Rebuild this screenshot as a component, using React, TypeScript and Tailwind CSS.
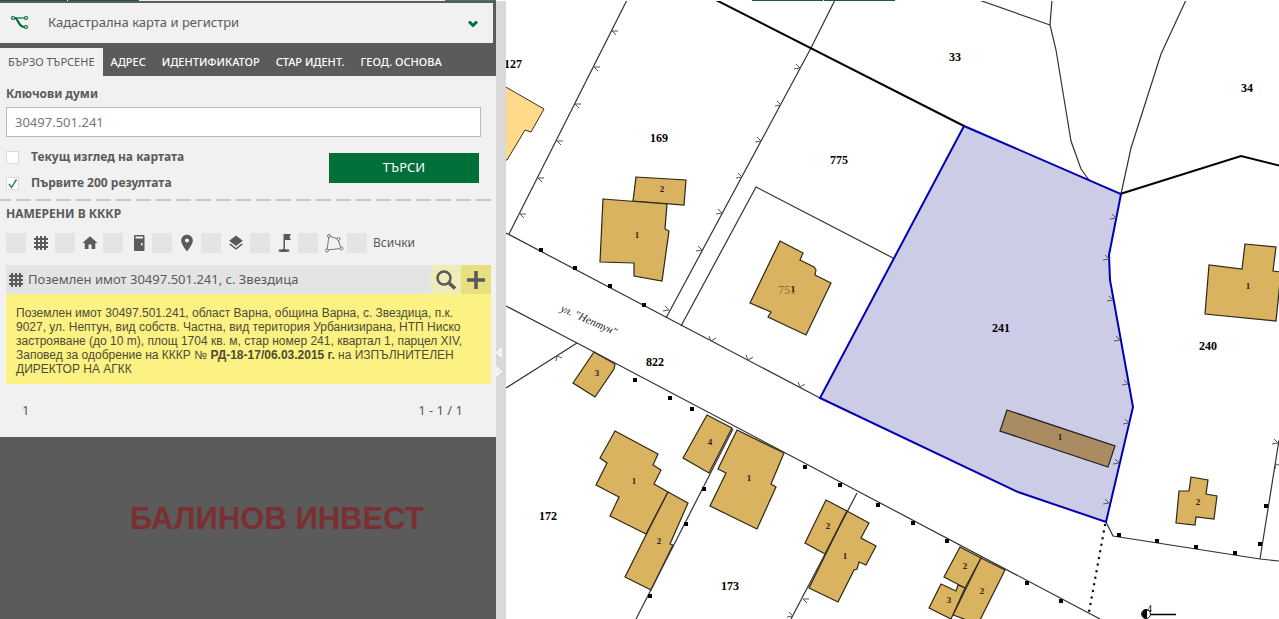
import { useState } from 'react';
import type { ReactNode } from 'react';
import { MdHome, MdLayers, MdLocationOn } from 'react-icons/md';

const tabs = ['БЪРЗО ТЪРСЕНЕ', 'АДРЕС', 'ИДЕНТИФИКАТОР', 'СТАР ИДЕНТ.', 'ГЕОД. ОСНОВА'];

const GridIcon = () => (
  <svg className="size-4" viewBox="0 0 16 16" fill="none" stroke="currentColor" strokeWidth={2}>
    <path d="M4 1v14M8 1v14M12 1v14M1 4h14M1 8h14M1 12h14" />
  </svg>
);

const DoorIcon = () => (
  <svg className="size-4" viewBox="0 0 16 16" fill="currentColor">
    <path
      fillRule="evenodd"
      d="M3 1a1 1 0 0 1 1-1h8.500a1 1 0 0 1 1 1v14a1 1 0 0 1-1 1H4a1 1 0 0 1-1-1zM4.500 1.500v2h7.500v-2zM10 8v2.500h1.500V8z"
    />
  </svg>
);

const FlagIcon = () => (
  <svg className="h-5 w-4" viewBox="0 0 16 20" fill="currentColor">
    <path d="M6.500 1H8v16H6.500zM8 1h6l-1.500 3L14 7H8z" />
    <ellipse cx="7" cy="17.500" rx="5.500" ry="1.500" />
  </svg>
);

const PolygonIcon = () => (
  <svg className="size-5" viewBox="0 0 20 20" fill="none" stroke="#777" strokeWidth={1}>
    <path d="M5 3L3 17L17 15.500L14 6Z" />
    <circle cx="5" cy="3" r="1.500" fill="#eee" />
    <circle cx="3" cy="17.500" r="1.500" fill="#eee" />
    <circle cx="17.500" cy="15.500" r="1.500" fill="#eee" />
    <circle cx="14.500" cy="6" r="1.500" fill="#eee" />
  </svg>
);

const filters: { label: string; icon: ReactNode }[] = [
  { label: 'Поземлени имоти', icon: <GridIcon /> },
  { label: 'Сгради', icon: <MdHome className="size-[18px]" /> },
  { label: 'Обекти', icon: <DoorIcon /> },
  { label: 'Адреси', icon: <MdLocationOn className="size-5" /> },
  { label: 'Слоеве', icon: <MdLayers className="size-[18px]" /> },
  { label: 'Геодезически точки', icon: <FlagIcon /> },
  { label: 'Контури', icon: <PolygonIcon /> },
];

// Map geometry
const buildings = [
  '636,177 686,180 684,205 633,201',
  '603,199 667,204 665,229 669,231 662,281 634,276 634,263 600,262',
  '780,241 803,253 800,260 814,267 816,270 815,275 831,283 806,335 768,317 771,312 750,303',
  '594,352 615,364 614,369 595,397 573,383',
  '615,431 658,454 653,465 661,470 654,484 668,492 646,534 610,516 619,497 596,485 607,463 600,458',
  '668,492 688,503 670,544 673,545 651,590 625,577 646,535',
  '707,415 732,428 709,473 683,458',
  '737,430 784,453 771,484 776,487 757,529 710,506 726,473 718,469',
  '826,500 847,511 825,554 805,543',
  '847,511 869,523 861,538 876,546 866,565 859,562 857,569 854,570 838,602 809,588',
  '960,547 981,558 965,588 944,577',
  '981,558 1005,570 978,624 953,615',
  '941,584 956,591 958,585 965,588 951,619 929,608',
  '1245,244 1276,247 1273,271 1281,272 1276,321 1205,314 1209,265 1242,269',
  '1191,477 1208,480 1206,494 1217,496 1214,519 1196,517 1195,525 1176,523 1179,491 1189,491',
];

const borders = [
  '627,0 509,234',
  '506,233 820,398',
  '835,0 811,48 666,318',
  '895,259 756,187 681,326',
  '979,0 1050,25',
  '1052,0 1050,25 1056,50 1071,141 1081,169 1089,180',
  '1186,0 1161,54 1131,148 1121,194',
  '506,306 577,343 1100,619',
  '506,388 577,343',
  '733,429 636,619',
  '857,493 791,619',
  '1106,522 1113,536 1260,559 1279,561',
  '1260,559 1279,440',
];

const posts = [
  [541, 250], [575, 268], [610, 286], [644, 305], [635, 380], [670, 398], [692, 409],
  [805, 467], [840, 485], [878, 505], [913, 523], [947, 541], [1027, 583], [1061, 601],
  [704, 489], [686, 524], [650, 596], [1119, 535], [1157, 541], [1196, 547], [1235, 553],
  [1260, 544], [1266, 506],
];

const ticks = [
  { d: 'M6 0H0L4 4', at: [[612, 31], [594, 67], [575, 104], [557, 141], [538, 178], [520, 214], [803, 599]] },
  {
    d: 'M-4 -4L0 0L-6 1',
    at: [
      [800, 68], [781, 105], [761, 141], [742, 177], [722, 213], [702, 250], [669, 310], [793, 616],
      [1116, 218], [1109, 259], [1113, 300], [1120, 340], [1128, 384], [1129, 423], [1119, 463],
      [1109, 503], [1278, 443],
    ],
  },
  { d: 'M-2 -5L0 0L5 -3', at: [[711, 341], [748, 360], [800, 387]] },
  { d: 'M-1 5L0 0L5 2', at: [[557, 356], [1276, 464]] },
];

const parcelLabels: [number, number, string][] = [
  [513, 68, '127'], [659, 142, '169'], [839, 164, '775'], [955, 61, '33'], [1247, 92, '34'],
  [1001, 332, '241'], [1208, 350, '240'], [655, 366, '822'], [548, 520, '172'], [730, 590, '173'],
];

const buildingLabels: [number, number, string][] = [
  [662, 192, '2'], [637, 238, '1'], [793, 292, '1'], [597, 376, '3'], [634, 484, '1'],
  [659, 544, '2'], [710, 445, '4'], [749, 481, '1'], [828, 529, '2'], [845, 559, '1'],
  [965, 569, '2'], [982, 594, '2'], [949, 603, '3'], [1248, 289, '1'], [1198, 505, '2'],
  [1060, 440, '1'],
];

function CadastreMap() {
  return (
    <svg
      className="block h-full w-full font-['Liberation_Serif',serif]"
      viewBox="506 1 773 618"
      preserveAspectRatio="xMinYMin slice"
      role="img"
      aria-label="Кадастрална карта"
    >
      <polygon points="504,86 544,109 531,132 525,130 507,160 504,160" fill="#ffda8b" stroke="#3a3020" />
      <g fill="#d9b360" stroke="#2d2718" strokeWidth={1.2}>
        {buildings.map((points) => (
          <polygon key={points} points={points} />
        ))}
      </g>
      <g fill="none" stroke="#333" strokeWidth={1.2}>
        {borders.map((points) => (
          <polyline key={points} points={points} />
        ))}
      </g>
      <g fill="none" stroke="#000" strokeWidth={2}>
        <path d="M716 0L964 126" />
        <path d="M1120 194L1241 156L1281 166" />
      </g>
      <path d="M1105 525L1089 612" stroke="#111" strokeWidth={2.500} strokeLinecap="round" strokeDasharray="0 6.700" />

      {/* Selected parcel */}
      <polygon
        points="964,126 1121,194 1109,255 1110,280 1133,407 1106,522 1018,492 820,398"
        fill="#cccce7"
        stroke="#0000b4"
        strokeWidth={2}
      />
      <polygon points="1007,410 1115,446 1108,467 1000,431" fill="#a98c62" stroke="#222" strokeWidth={1.2} />

      <g fill="none" stroke="#555">
        {ticks.map((tick) =>
          tick.at.map(([x, y]) => <path key={`${x}-${y}`} d={tick.d} transform={`translate(${x} ${y})`} />)
        )}
      </g>
      {posts.map(([x, y]) => (
        <rect key={`${x}-${y}`} x={x - 2} y={y - 2} width={4} height={4} fill="#000" />
      ))}

      <g textAnchor="middle" fontSize={12} fontWeight={700}>
        {parcelLabels.map(([x, y, text]) => (
          <text key={text} x={x} y={y}>
            {text}
          </text>
        ))}
      </g>
      <text x={787} y={294} textAnchor="middle" fontSize={12} fill="#8a6f36">
        751
      </text>
      <g textAnchor="middle" fontSize={9} fontWeight={700} fill="#2d2410">
        {buildingLabels.map(([x, y, text]) => (
          <text key={`${x}-${y}`} x={x} y={y}>
            {text}
          </text>
        ))}
      </g>
      <text transform="translate(560 311) rotate(24)" fontSize={11} fontStyle="italic" fill="#222">
        ул. "Нептун"
      </text>

      <circle cx={1146} cy={614} r={4.500} fill="#fff" stroke="#111" />
      <path d="M1147 609a5 5 0 0 0 0 10z" />
      <path d="M1151 614.500H1176" stroke="#000" strokeWidth={1.500} />
      <text x={1147} y={612} fontSize={10}>
        4
      </text>
    </svg>
  );
}

function SearchForm() {
  return (
    <form className="px-1.5 pt-2.5" onSubmit={(e) => e.preventDefault()}>
      <label htmlFor="keywords" className="block text-xs leading-4 font-bold">
        Ключови думи
      </label>
      <input
        id="keywords"
        type="text"
        defaultValue="30497.501.241"
        className="mt-[5px] block h-[30px] w-[475px] border border-[#b9b9b9] bg-white px-2 text-[13px] text-[#777] outline-none"
      />
      <div className="mt-3 flex items-start justify-between pr-[11px]">
        <div className="text-xs leading-4 font-bold">
          <label className="flex items-center gap-3">
            <input type="checkbox" className="size-[13px] appearance-none border border-[#d8dcd9] bg-white" />
            Текущ изглед на картата
          </label>
          <label className="mt-2.5 flex items-center gap-3">
            <span className="grid size-[13px]">
              <input
                type="checkbox"
                defaultChecked
                className="peer col-start-1 row-start-1 size-[13px] appearance-none border border-[#d8dcd9] bg-white"
              />
              <svg
                className="pointer-events-none invisible col-start-1 row-start-1 size-[13px] peer-checked:visible"
                viewBox="0 0 13 13"
                fill="none"
                stroke="#2e8b57"
                strokeWidth={1.500}
              >
                <path d="M3 7l2.500 3.500L10.500 2.500" />
              </svg>
            </span>
            Първите 200 резултата
          </label>
        </div>
        <button type="submit" className="mt-1 h-[30px] w-[150px] bg-[#00703a] text-[13px] text-white">
          ТЪРСИ
        </button>
      </div>
    </form>
  );
}

function Results() {
  return (
    <section className="pl-1.5">
      <h2 className="pt-[5px] text-xs leading-4 font-bold">НАМЕРЕНИ В КККР</h2>
      <div className="mt-[11px] flex h-5 items-center">
        <div className="grid w-[341px] grid-cols-7">
          {filters.map((filter) => (
            <label key={filter.label} aria-label={filter.label} className="flex items-center">
              <input type="checkbox" className="size-5 appearance-none bg-[#e4e4e4]" />
              <span className="flex h-5 flex-1 items-center justify-center pl-0.5">{filter.icon}</span>
            </label>
          ))}
        </div>
        <label className="flex items-center gap-1.5 text-xs">
          <input type="checkbox" className="size-5 appearance-none bg-[#e4e4e4]" />
          Всички
        </label>
      </div>

      <div className="mt-3 mr-[5px]">
        <div className="flex h-[29px] items-center bg-[#e4e4e4]">
          <span className="pl-0.5">
            <GridIcon />
          </span>
          <span className="flex-1 pl-1 text-[13px]">Поземлен имот 30497.501.241, с. Звездица</span>
          <button aria-label="Покажи" className="flex h-full w-[30px] items-center justify-center bg-[#efecb8]">
            <svg className="size-5" viewBox="0 0 20 20" fill="none" stroke="currentColor">
              <circle cx="8" cy="8" r="6.500" strokeWidth={2.500} />
              <path d="M12.500 12.500L19 18.500" strokeWidth={3.500} />
            </svg>
          </button>
          <button aria-label="Добави" className="flex h-full w-[30px] items-center justify-center bg-[#e8e07f]">
            <svg className="size-5" viewBox="0 0 20 20" stroke="currentColor" strokeWidth={3.500}>
              <path d="M10 1v18M1 10h18" />
            </svg>
          </button>
        </div>
        <p className="bg-[#fcf283] px-2.5 pt-3 pb-2 font-['Liberation_Sans',sans-serif] text-xs leading-[14px] text-[#4d4b35]">
          Поземлен имот 30497.501.241, област Варна, община Варна, с. Звездица, п.к. 9027, ул. Нептун, вид собств.
          Частна, вид територия Урбанизирана, НТП Ниско застрояване (до 10 m), площ 1704 кв. м, стар номер 241, квартал
          1, парцел XIV, Заповед за одобрение на КККР № <b>РД-18-17/06.03.2015 г.</b> на ИЗПЪЛНИТЕЛЕН ДИРЕКТОР НА АГКК
        </p>
      </div>

      <div className="flex h-[53px] items-center justify-between pr-[33px] pl-4 text-[13px]">
        <span>1</span>
        <span>1 - 1 / 1</span>
      </div>
    </section>
  );
}

export default function App() {
  const [activeTab, setActiveTab] = useState(tabs[0]);

  return (
    <div className="flex h-screen flex-col overflow-hidden bg-white font-['Noto_Sans',sans-serif] text-[#5a5a5a]">
      {/* Bottom edge of the toolbar */}
      <div className="flex h-px shrink-0">
        <div className="w-[67px] bg-[#24573c]" />
        <div className="ml-px w-[71px] bg-[#24573c]" />
        <div className="w-[306px] bg-[#eeeeee]" />
        <div className="w-[51px] bg-[#35825a]" />
        <div className="ml-[256px] w-[71px] bg-[#24573c]" />
        <div className="ml-px w-[71px] bg-[#24573c]" />
      </div>

      <main className="flex min-h-0 flex-1">
        <aside className="w-[496px] shrink-0 bg-[#5b5b5b] pt-0.5">
          <button className="mr-[3px] flex h-10 w-[493px] items-center bg-[#f1f1f1] pr-[13px] pl-2.5 text-left text-[13px]">
            <svg className="size-5" viewBox="0 0 20 20" fill="none" stroke="#00703a" strokeWidth={1.2}>
              <circle cx="3" cy="5" r="1.500" />
              <circle cx="16" cy="5" r="1.500" />
              <circle cx="16" cy="14" r="1.500" />
              <path d="M4.500 5H14.500" />
              <path d="M5 5C9 6 8 14 14.500 14" strokeWidth={2.200} />
            </svg>
            <span className="flex-1 pl-[18px]">Кадастрална карта и регистри</span>
            <svg className="size-3.5" viewBox="0 0 14 14" fill="none" stroke="#00703a" strokeWidth={3}>
              <path d="M3 5.500l4 4l4-4" />
            </svg>
          </button>

          <div role="tablist" className="mt-[5px] flex h-7">
            {tabs.map((tab) => (
              <button
                key={tab}
                role="tab"
                aria-selected={tab === activeTab}
                onClick={() => setActiveTab(tab)}
                className={`px-2 text-[11px] whitespace-nowrap ${
                  tab === activeTab ? 'bg-[#f1f1f1]' : 'font-medium text-white'
                }`}
              >
                {tab}
              </button>
            ))}
          </div>

          <div className="bg-[#f1f1f1]">
            <SearchForm />
            <div className="mt-2 h-0.5 bg-[repeating-linear-gradient(90deg,#c6c6c6_0_11px,transparent_11px_16px,#c6c6c6_16px_20px)]" />
            <Results />
          </div>

          <div className="pt-16 pl-[130px] font-['Liberation_Sans',sans-serif] text-[31px] leading-9 font-bold whitespace-nowrap text-[#7c2f30]">
            БАЛИНОВ ИНВЕСТ
          </div>
        </aside>

        <div className="flex w-2.5 shrink-0 items-center bg-[#d9d9d9]">
          <svg className="mt-26 h-7 w-2" viewBox="0 0 8 28" fill="none" stroke="#fff" strokeWidth={1.500}>
            <path d="M5 1v7L1 4.500z" />
            <path d="M1 20v7l4-3.500z" />
          </svg>
        </div>

        <div className="min-w-0 flex-1">
          <CadastreMap />
        </div>
      </main>
    </div>
  );
}
